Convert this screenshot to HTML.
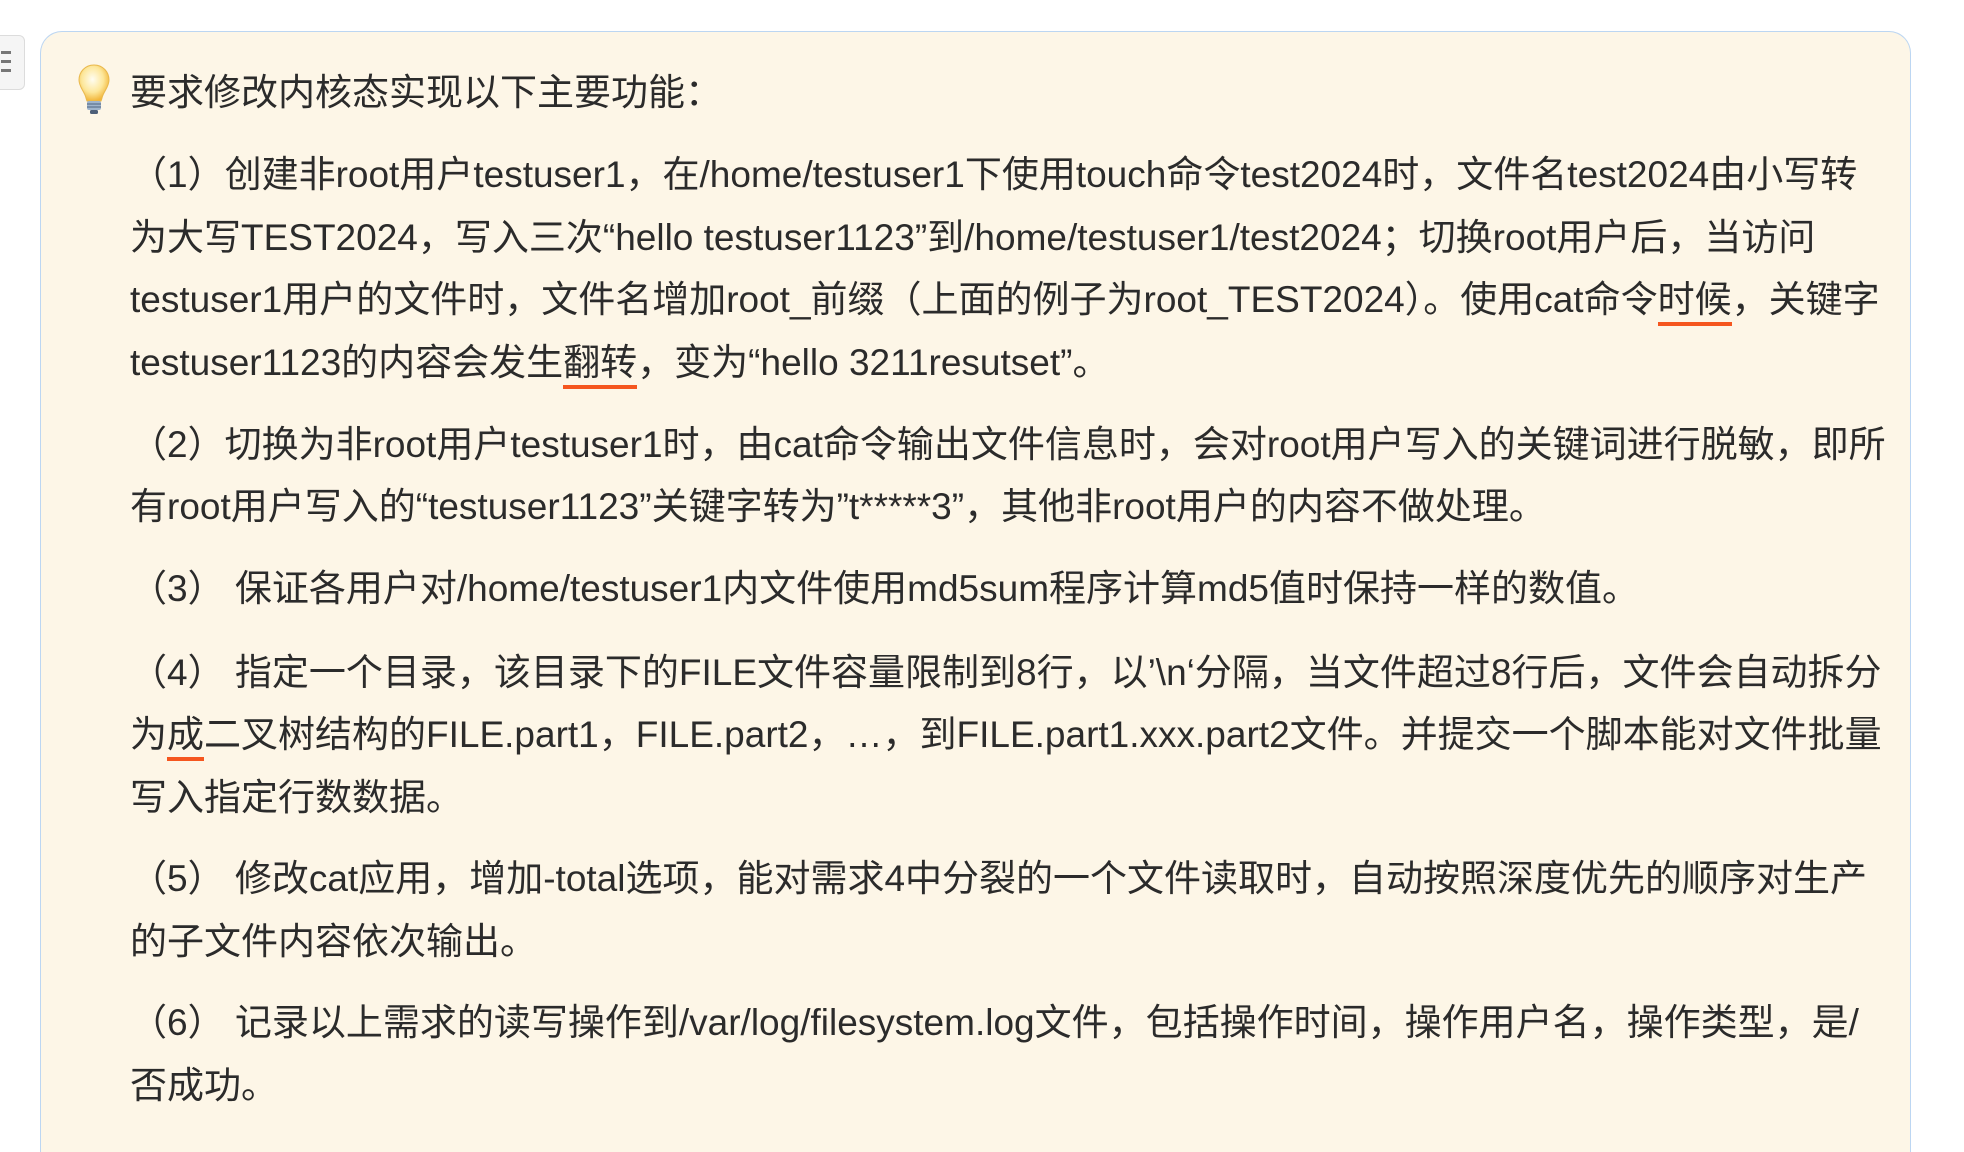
<!DOCTYPE html>
<html><head><meta charset="utf-8"><style>
html,body{margin:0;padding:0;width:1964px;height:1152px;overflow:hidden;background:#fff;}
#w{position:relative;width:1964px;height:1152px;overflow:hidden;}
.side{position:absolute;left:-10px;top:35px;width:33px;height:53px;border:1px solid #dcdcdc;border-radius:6px;background:#f5f5f5;}
.side i{position:absolute;left:10px;width:10px;height:3px;background:#777;}
.card{position:absolute;left:40px;top:31px;width:1871px;height:1121px;box-sizing:border-box;background:#fdf6e7;border:1.5px solid #bcd6f2;border-bottom:0;border-radius:22px 22px 0 0;}
.l{position:absolute;left:130px;height:62px;line-height:62px;font-size:37px;color:#2b2b2b;white-space:nowrap;font-family:"Liberation Sans","Noto Sans CJK SC",sans-serif;}
u{text-decoration:none;border-bottom:4px solid #f5561f;padding-bottom:2px;}
</style></head><body><div id="w">
<div class="side"><i style="top:15px"></i><i style="top:24px"></i><i style="top:33px"></i></div>
<div class="card"></div>
<svg style="position:absolute;left:78px;top:64px" width="32" height="52" viewBox="0 0 32 52">
<defs><radialGradient id="g" cx="0.45" cy="0.4" r="0.6"><stop offset="0" stop-color="#fffdf2"/><stop offset="0.6" stop-color="#fde79a"/><stop offset="1" stop-color="#f2b63a"/></radialGradient></defs>
<path d="M16 1C7 1 1 8 1 16c0 6 4 10 6 15 1 2 1 4 2 6h14c1-2 1-4 2-6 2-5 6-9 6-15C31 8 25 1 16 1z" fill="url(#g)" stroke="#e9b84c" stroke-width="1"/>
<rect x="9" y="37" width="14" height="9" rx="2" fill="#9fb4cc"/><path d="M9 40h14M9 43h14" stroke="#5f7590" stroke-width="1.2"/>
<rect x="12" y="46" width="8" height="4" rx="1.5" fill="#4d5f78"/>
</svg>
<div class="l" style="top:62px">要求修改内核态实现以下主要功能：</div>
<div class="l" style="top:144px">（1）创建非root用户testuser1，在/home/testuser1下使用touch命令test2024时，文件名test2024由小写转</div>
<div class="l" style="top:207px">为大写TEST2024，写入三次“hello testuser1123”到/home/testuser1/test2024；切换root用户后，当访问</div>
<div class="l" style="top:269px">testuser1用户的文件时，文件名增加root_前缀（上面的例子为root_TEST2024）。使用cat命令<u>时候</u>，关键字</div>
<div class="l" style="top:332px">testuser1123的内容会发生<u>翻转</u>，变为“hello 3211resutset”。</div>
<div class="l" style="top:414px">（2）切换为非root用户testuser1时，由cat命令输出文件信息时，会对root用户写入的关键词进行脱敏，即所</div>
<div class="l" style="top:476px">有root用户写入的“testuser1123”关键字转为”t*****3”，其他非root用户的内容不做处理。</div>
<div class="l" style="top:558px">（3） 保证各用户对/home/testuser1内文件使用md5sum程序计算md5值时保持一样的数值。</div>
<div class="l" style="top:642px">（4） 指定一个目录，该目录下的FILE文件容量限制到8行，以’\n‘分隔，当文件超过8行后，文件会自动拆分</div>
<div class="l" style="top:704px">为<u>成</u>二叉树结构的FILE.part1，FILE.part2，…，到FILE.part1.xxx.part2文件。并提交一个脚本能对文件批量</div>
<div class="l" style="top:767px">写入指定行数数据。</div>
<div class="l" style="top:848px">（5） 修改cat应用，增加-total选项，能对需求4中分裂的一个文件读取时，自动按照深度优先的顺序对生产</div>
<div class="l" style="top:911px">的子文件内容依次输出。</div>
<div class="l" style="top:992px">（6） 记录以上需求的读写操作到/var/log/filesystem.log文件，包括操作时间，操作用户名，操作类型，是/</div>
<div class="l" style="top:1055px">否成功。</div>
</div></body></html>
